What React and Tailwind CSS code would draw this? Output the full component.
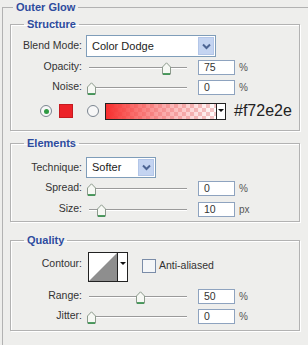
import React from 'react';

const Chevron = () => (
    <svg width="9" height="7" viewBox="0 0 9 7">
        <polyline points="1,1.5 4.5,5 8,1.5" fill="none" stroke="#4d6593" strokeWidth="2" />
    </svg>
);

const Thumb = ({ at }) => (
    <svg
        className="absolute top-[5px]"
        style={{ left: at - 4.5 }}
        width="9"
        height="13"
        viewBox="0 0 9 13"
    >
        <path d="M0.5 5 L4.5 0.8 L8.5 5 V12.2 H0.5 Z" fill="#f6f8f4" stroke="#8c9a8c" />
        <line x1="1" y1="12" x2="8" y2="12" stroke="#2f8d47" strokeWidth="1.6" />
    </svg>
);

const Select = ({ value, width }) => (
    <div className={`flex items-stretch bg-white border border-[#7f9db9] ${width}`}>
        <div className="flex-1 pl-[5px] flex items-center text-[11px] text-[#222]">{value}</div>
        <div className="w-[16px] my-[1px] mr-[1px] bg-[#c4d4f1] border border-[#b3c6e8] flex items-center justify-center">
            <Chevron />
        </div>
    </div>
);

const Field = ({ value, unit }) => (
    <>
        <div className="ml-[8px] w-[37px] h-[15px] border border-[#8ea3bf] bg-white pl-[5px] text-[10.5px] leading-[13px] text-[#333]">
            {value}
        </div>
        <div className="ml-[4px] text-[10px] text-[#555]">{unit}</div>
    </>
);

const Row = ({ label, children, className = '', labelClass = '' }) => (
    <div className={`flex items-center ${className}`}>
        <div className={`w-[71px] text-right text-[10.5px] text-[#333] ${labelClass}`}>{label}</div>
        <div className="ml-[4px] flex items-center">{children}</div>
    </div>
);

const SliderRow = ({ label, at, value, unit, className = '' }) => (
    <Row label={label} className={`h-[20px] ${className}`}>
        <div className="relative w-[104px] h-[20px]">
            <div className="absolute left-[3px] w-[98px] top-[10px] h-px bg-[#9a9a9a] shadow-[0_1px_0_#ffffff]" />
            <Thumb at={at} />
        </div>
        <Field value={value} unit={unit} />
    </Row>
);

const Group = ({ title, className = '', children }) => (
    <fieldset className={`w-[290px] border border-[#b2b2b2] shadow-[inset_1px_1px_0_#ffffff,1px_1px_0_#ffffff] ${className}`}>
        <legend className="ml-[13px] px-[3px] text-[11px] leading-[14px] font-bold text-[#2d4b9e]">{title}</legend>
        {children}
    </fieldset>
);

const Radio = ({ checked }) => (
    <div className="w-[12px] h-[12px] rounded-full border border-[#7b8590] bg-[#f7f7f7] flex items-center justify-center">
        {checked && <div className="w-[5px] h-[5px] rounded-full bg-[#2f9a43]" />}
    </div>
);

export default function App() {
    return (
        <div className="w-[308px] h-[345px] overflow-hidden bg-[#eeeeec] font-['Liberation_Sans',Arial,sans-serif]">
            <fieldset className="ml-[2px] w-[330px] h-[400px] border border-[#b2b2b2] pl-[7px] pt-[3px]">
                <legend className="ml-[3px] px-[3px] text-[11px] leading-[14px] font-bold text-[#2d4b9e]">Outer Glow</legend>

                <Group title="Structure" className="h-[114px]">
                    <Row label="Blend Mode:" className="mt-[4px] h-[22px]">
                        <Select value="Color Dodge" width="w-[130px] h-[22px]" />
                    </Row>
                    <SliderRow label="Opacity:" at={80} value="75" unit="%" />
                    <SliderRow label="Noise:" at={5} value="0" unit="%" />
                    <div className="mt-[4px] h-[20px] flex items-center">
                        <div className="ml-[29px]">
                            <Radio checked />
                        </div>
                        <div className="ml-[7px] w-[14px] h-[14px] bg-[#ec2228] border border-[#c51a1f]" />
                        <div className="ml-[14px]">
                            <Radio />
                        </div>
                        <div className="ml-[6px] w-[121px] h-[17px] border border-[#222] flex">
                            <div className="flex-1 bg-[repeating-conic-gradient(#f3c8c8_0_25%,#ffffff_0_50%)] bg-[length:8px_8px]">
                                <div className="w-full h-full bg-gradient-to-r from-[#f72e2e] via-[#f76a6a]/60 to-transparent" />
                            </div>
                            <div className="w-[9px] bg-white border-l border-[#222] flex justify-center pt-[5px]">
                                <div className="w-0 h-0 border-l-[3px] border-r-[3px] border-t-[3px] border-l-transparent border-r-transparent border-t-[#111]" />
                            </div>
                        </div>
                        <div className="ml-[8px] text-[16px] leading-[18px] text-[#222]">#f72e2e</div>
                    </div>
                </Group>

                <Group title="Elements" className="mt-[5px] h-[86px]">
                    <Row label="Technique:" className="mt-[7px] h-[21px]">
                        <Select value="Softer" width="w-[70px] h-[21px]" />
                    </Row>
                    <SliderRow label="Spread:" at={5} value="0" unit="%" />
                    <SliderRow label="Size:" at={15} value="10" unit="px" className="mt-[1px]" />
                </Group>

                <Group title="Quality" className="mt-[11px] h-[98px]">
                    <Row label="Contour:" className="mt-[5px] h-[30px]" labelClass="-mt-[6px]">
                        <div className="ml-[2px] w-[40px] h-[30px] border border-[#222] bg-white flex">
                            <svg width="28" height="28" viewBox="0 0 28 28">
                                <polygon points="0,28 28,0 28,28" fill="#8e8e8e" />
                            </svg>
                            <div className="flex-1 border-l border-[#222] flex justify-center pt-[9px]">
                                <div className="w-0 h-0 border-l-[3px] border-r-[3px] border-t-[3px] border-l-transparent border-r-transparent border-t-[#111]" />
                            </div>
                        </div>
                        <div className="ml-[14px] -mt-[3px] w-[14px] h-[14px] border border-[#7a8ca8] bg-[#f4f6f8]" />
                        <div className="ml-[3px] -mt-[3px] text-[10.5px] text-[#333]">Anti-aliased</div>
                    </Row>
                    <SliderRow label="Range:" at={54} value="50" unit="%" className="mt-[4px]" />
                    <SliderRow label="Jitter:" at={5} value="0" unit="%" />
                </Group>
            </fieldset>
        </div>
    );
}
